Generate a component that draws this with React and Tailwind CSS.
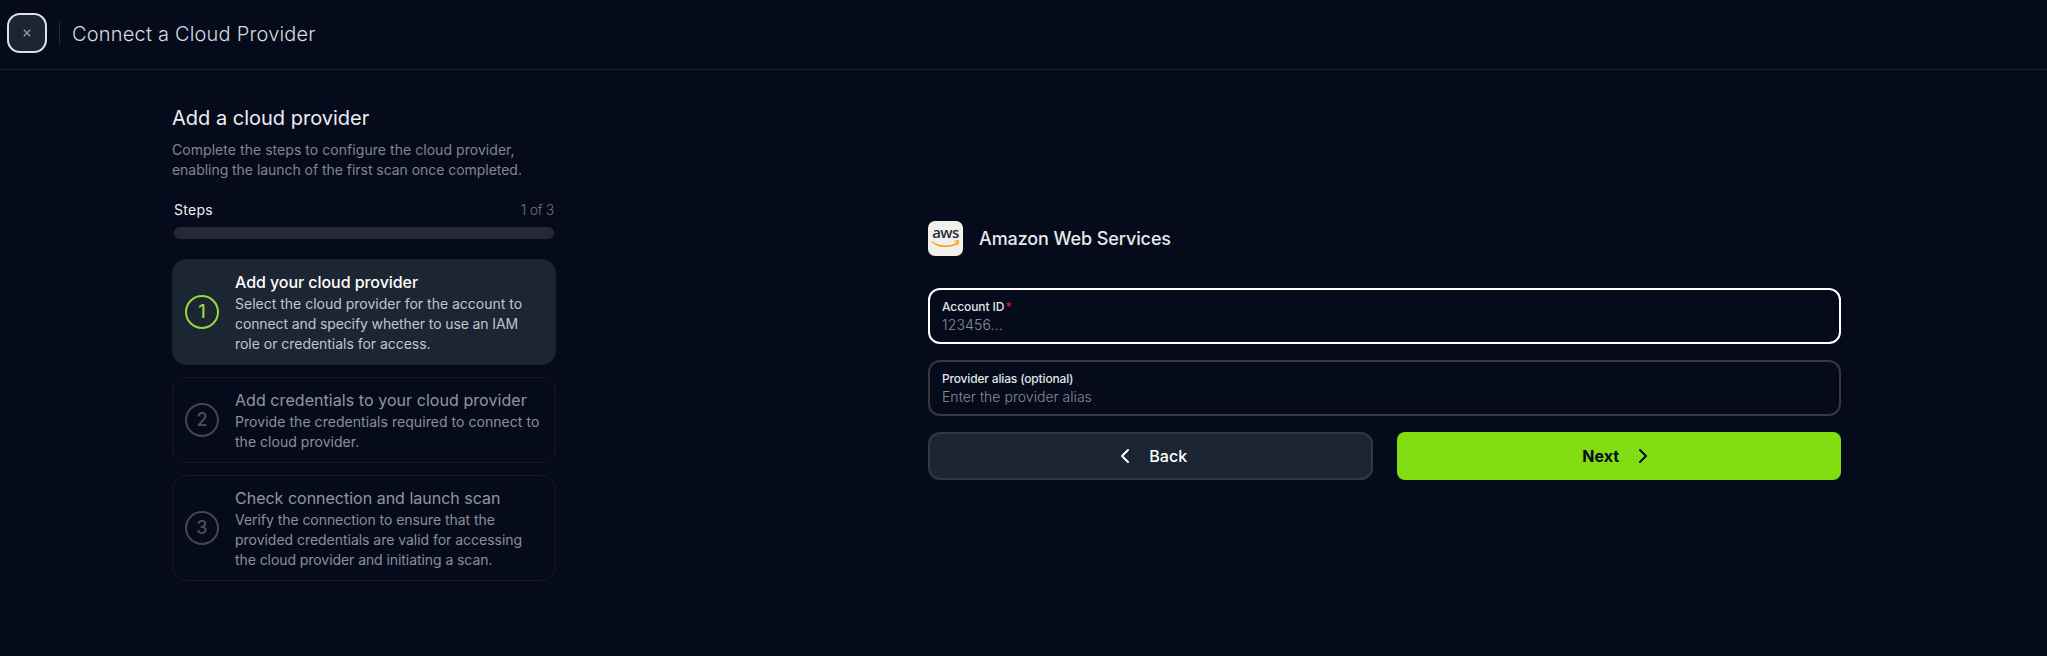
import { ChevronLeft, ChevronRight } from "lucide-react";

const steps = [
  {
    title: "Add your cloud provider",
    titleClass: "tracking-[-0.06px]",
    active: true,
    lines: [
      ["Select the cloud provider for the account to", ""],
      ["connect and specify whether to use an IAM", "tracking-[-0.11px]"],
      ["role or credentials for access.", "tracking-[-0.03px]"],
    ],
  },
  {
    title: "Add credentials to your cloud provider",
    titleClass: "tracking-[0.06px]",
    lines: [
      ["Provide the credentials required to connect to", "tracking-[0.05px]"],
      ["the cloud provider.", "tracking-[0.03px]"],
    ],
  },
  {
    title: "Check connection and launch scan",
    titleClass: "",
    lines: [
      ["Verify the connection to ensure that the", "tracking-[-0.05px]"],
      ["provided credentials are valid for accessing", "tracking-[-0.03px]"],
      ["the cloud provider and initiating a scan.", "tracking-[-0.07px]"],
    ],
  },
];

function AwsLogo() {
  return (
    <div className="flex size-[35px] flex-col items-center rounded-[7px] bg-[#f2f0eb] pt-[3px]">
      <span className="h-[17px] font-['Open_Sans',sans-serif] text-[15px] leading-[17px] font-semibold tracking-[-0.5px] text-[#252f3e]">
        aws
      </span>
      <svg width="29" height="8" viewBox="0 0 29 8" fill="none" className="-mt-px">
        <path
          d="M1 1.2C8 6.4 18.5 6.8 25.8 2.6C26.8 2.1 27.5 3.2 26.6 3.8C18.5 8.7 7.5 8.2 0.7 1.9C0.2 1.4 0.5 0.9 1 1.2Z"
          fill="#f90"
        />
        <path
          d="M23.2 1C24.6 0.1 27.4 0.1 27.9 0.6C28.4 1.3 27.7 4.3 26.3 5.4C26 5.6 25.7 5.4 25.8 5C26.2 4.1 26.8 2.4 26.4 1.9C26 1.5 24.3 1.6 23.5 1.7C23.1 1.7 23 1.3 23.2 1Z"
          fill="#f90"
        />
      </svg>
    </div>
  );
}

function Step({ step, number }) {
  return (
    <li
      className={`flex items-center gap-4 rounded-[14px] border px-3 py-2.5 ${
        step.active ? "border-[#1f2224] bg-[#1c2532]" : "border-[#15181d]"
      }`}
    >
      <span
        className={`flex size-[34px] shrink-0 items-center justify-center rounded-full border-2 text-lg font-medium ${
          step.active ? "border-[#98d83e] text-[#98d83e]" : "border-[#45474f] text-[#4d4f58]"
        }`}
      >
        {number}
      </span>
      <div className="whitespace-nowrap">
        <h3
          className={`text-base leading-6 ${step.titleClass} ${
            step.active ? "font-medium text-white" : "text-[#94969d]"
          }`}
        >
          {step.title}
        </h3>
        {step.lines.map(([line, tracking]) => (
          <p
            key={line}
            className={`text-sm leading-5 ${tracking} ${step.active ? "text-[#c2c5ca]" : "text-[#8d8f97]"}`}
          >
            {line}
          </p>
        ))}
      </div>
    </li>
  );
}

export default function App() {
  return (
    <div className="h-[656px] overflow-hidden bg-[#060b1c] font-['Inter',sans-serif]">
      <header className="flex h-[70px] items-start border-b border-[#1b202e] pt-[13px] pl-[7px]">
        <div className="flex h-10 items-center">
          <button className="flex size-10 items-center justify-center rounded-[13px] border-2 border-[#dfe3e9] bg-[#1c2532]">
            <svg width="8" height="8" viewBox="0 0 8 8" fill="none" stroke="#949ba7" strokeWidth="1.3">
              <path d="M0.8 0.8L7.2 7.2M7.2 0.8L0.8 7.2" />
            </svg>
          </button>
          <div className="ml-3 h-6 w-px bg-[#242936]" />
          <h1 className="ml-3 pt-px text-xl leading-7 font-light tracking-[0.2px] whitespace-nowrap text-[#d8dade]">
            Connect a Cloud Provider
          </h1>
        </div>
      </header>

      <main className="flex pl-[172px]">
        <section className="w-[384px] pt-[34px]">
          <h2 className="mb-2 text-xl leading-7 text-[#eceef0]">Add a cloud provider</h2>
          <p className="text-sm leading-5 tracking-[0.05px] whitespace-nowrap text-[#83858d]">
            Complete the steps to configure the cloud provider,
          </p>
          <p className="text-sm leading-5 tracking-[-0.04px] whitespace-nowrap text-[#83858d]">
            enabling the launch of the first scan once completed.
          </p>
          <div className="mt-5 px-0.5">
            <div className="flex justify-between text-sm leading-5">
              <span className="tracking-[0.3px] text-[#eceef0]">Steps</span>
              <span className="font-light tracking-[-0.3px] text-[#71737c]">1 of 3</span>
            </div>
            <div className="mt-[7px] h-3 rounded-full bg-[#272833]" />
          </div>
          <ol className="mt-5 flex flex-col gap-3">
            {steps.map((step, index) => (
              <Step key={step.title} step={step} number={index + 1} />
            ))}
          </ol>
        </section>

        <section className="ml-[372px] w-[913px] pt-[151px]">
          <div className="flex items-center gap-4">
            <AwsLogo />
            <h2 className="text-lg leading-7 font-medium tracking-[-0.1px] text-[#e6e8eb]">Amazon Web Services</h2>
          </div>

          <form className="mt-8 flex flex-col gap-4">
            <label className="flex h-14 flex-col rounded-xl border-2 border-white px-3 pt-[9px] whitespace-nowrap">
              <span className="text-xs leading-4 font-medium tracking-[-0.08px] text-[#e2e4e7]">
                Account ID<span className="ml-px text-[#dd1446]">*</span>
              </span>
              <span className="text-sm leading-5 font-light tracking-[0.15px] text-[#8a8c94]">123456...</span>
            </label>
            <label className="flex h-14 flex-col rounded-xl border-2 border-[#37373c] px-3 pt-[9px] whitespace-nowrap">
              <span className="text-xs leading-4 font-medium tracking-[-0.17px] text-[#e2e4e7]">
                Provider alias (optional)
              </span>
              <span className="text-sm leading-5 font-light tracking-[0.03px] text-[#8a8c94]">
                Enter the provider alias
              </span>
            </label>
            <div className="grid grid-cols-2 gap-6">
              <button
                type="button"
                className="flex h-12 items-center justify-center gap-3 rounded-xl border-2 border-[#37373c] bg-[#1c2532] text-base font-medium tracking-[0.1px] text-white"
              >
                <ChevronLeft size={24} strokeWidth={2} />
                <span>Back</span>
              </button>
              <button
                type="button"
                className="flex h-12 items-center justify-center gap-3 rounded-lg bg-[#82dd13] text-base font-bold text-[#060b1c]"
              >
                <span>Next</span>
                <ChevronRight size={24} strokeWidth={2} />
              </button>
            </div>
          </form>
        </section>
      </main>
    </div>
  );
}
